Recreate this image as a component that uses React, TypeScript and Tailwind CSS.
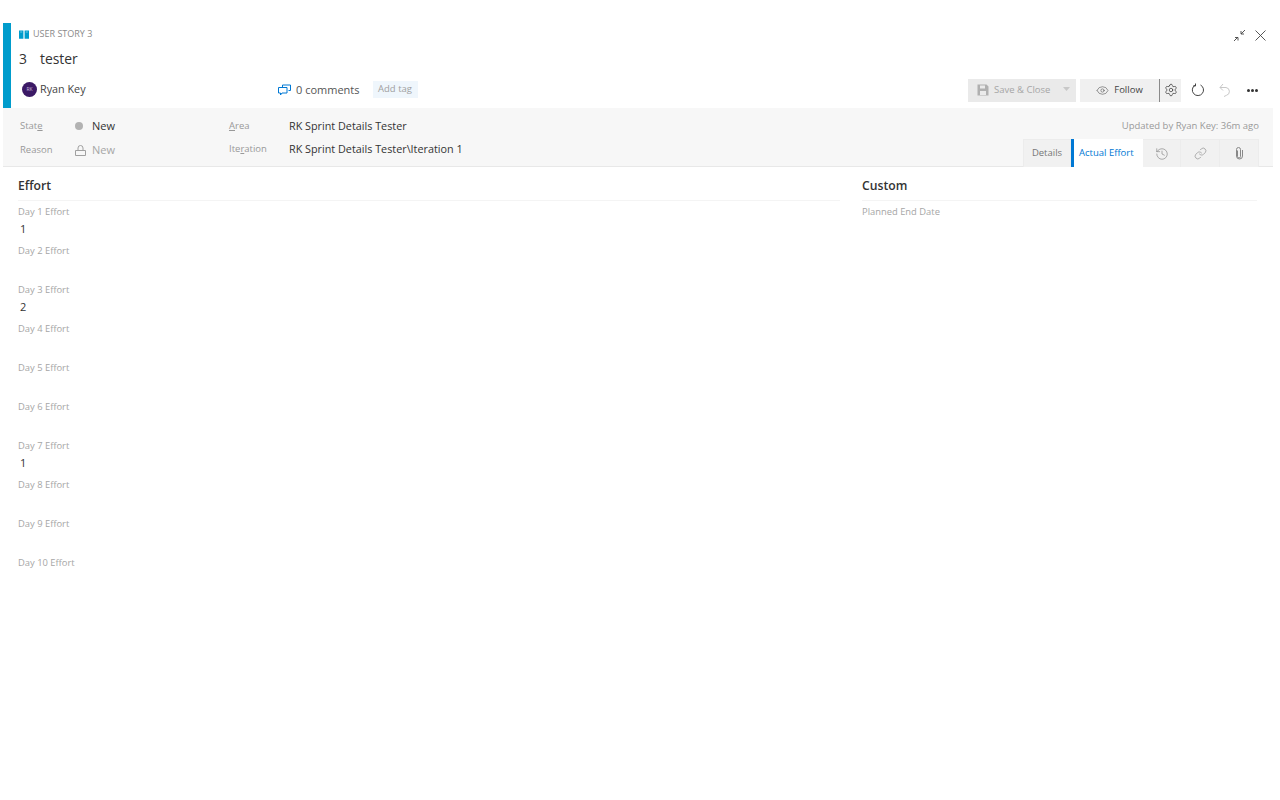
import { Eye, History, Link, Settings } from 'lucide-react';

const font = { fontFamily: '"Open Sans", "Noto Sans", sans-serif' };

const days = [
  { label: 'Day 1 Effort', value: '1' },
  { label: 'Day 2 Effort', value: '' },
  { label: 'Day 3 Effort', value: '2' },
  { label: 'Day 4 Effort', value: '' },
  { label: 'Day 5 Effort', value: '' },
  { label: 'Day 6 Effort', value: '' },
  { label: 'Day 7 Effort', value: '1' },
  { label: 'Day 8 Effort', value: '' },
  { label: 'Day 9 Effort', value: '' },
  { label: 'Day 10 Effort', value: '' },
];

function SectionHeading({ title }: { title: string }) {
  return (
    <div className="h-[25px] border-b border-[#f4f4f4] text-[12.2px] font-semibold leading-[19px] text-[#333333]">
      {title}
    </div>
  );
}

function Field({ label, value }: { label: string; value: string }) {
  return (
    <div className="h-[39px] pt-[4px]">
      <div className="text-[9.4px] leading-[13px] text-[#a6a6a6]">{label}</div>
      <div className="mt-[3px] pl-[2px] text-[11px] leading-[16px] text-[#333333]">{value}</div>
    </div>
  );
}

export default function App() {
  return (
    <div className="h-[800px] w-[1280px] overflow-hidden bg-white pl-[3px] pr-[7px] pt-[23px]" style={font}>
      {/* Header */}
      <div className="flex h-[85px] border-l-8 border-[#009ccc]">
        <div className="flex-1 pl-[8px]">
          <div className="flex h-[21px] items-center justify-between pt-[1px]">
            <div className="flex items-center gap-[4px] text-[9px] text-[#8a8a8a]">
              <svg width="10" height="9" viewBox="0 0 10 9">
                <path d="M0 0.5h4.4v8.2H0zM5.6 0.5H10v8.2H5.6z" fill="#009ccc" />
                <path d="M1.2 2h2M6.8 2h2" stroke="#8fd4ea" strokeWidth="0.8" />
              </svg>
              USER STORY 3
            </div>
            <div className="flex items-center gap-[9px] pr-[7px] pt-[2px]">
              <svg width="13" height="13" viewBox="0 0 13 13" fill="none" stroke="#444444" strokeWidth="0.9">
                <path d="M1 12l4-4M2 8.5h3v3M12 1L8 5M8 2v3h3" />
              </svg>
              <svg width="11" height="11" viewBox="0 0 11 11" fill="none" stroke="#444444" strokeWidth="0.9">
                <path d="M0.5 0.5l10 10M10.5 0.5l-10 10" />
              </svg>
            </div>
          </div>
          <div className="mt-[4px] flex h-[22px] items-center gap-[13px] text-[13.9px] text-[#333333]">
            <span>3</span>
            <span>tester</span>
          </div>
          <div className="mt-[8px] flex h-[24px] items-center">
            <div className="flex w-[259px] items-center gap-[3px] pb-[1px] pl-[3px] text-[10.8px] text-[#444444]">
              <div className="flex h-[15px] w-[15px] items-center justify-center rounded-full bg-[#3c1a66] text-[5px] text-[#c8b8dc]">
                RK
              </div>
              Ryan Key
            </div>
            <div className="flex items-center gap-[5px] text-[11px] text-[#555555]">
              <svg width="13" height="12" viewBox="0 0 13 12" fill="none" stroke="#0078d4" strokeWidth="1">
                <path d="M4.5 3V1h8v5.5h-2" />
                <path d="M0.5 3.5h8.5v5.5H4L2.5 11V9H0.5z" />
              </svg>
              0 comments
            </div>
            <div className="mb-[1px] ml-[13px] flex h-[17px] w-[45px] items-center justify-center bg-[#eff6fc] text-[9.5px] text-[#a0a0a0]">
              Add tag
            </div>
            <div className="ml-auto flex items-center pr-[15px]">
              <div className="flex h-[23px] w-[108px] items-center bg-[#eaeaea] pl-[9px] text-[9.5px] text-[#a6a6a6]">
                <svg width="12" height="12" viewBox="0 0 12 12" fill="#b0b0b0">
                  <path d="M0.5 0.5h9l2 2v9h-11zM3 1.5v3h5v-3zM3 7v4h6V7z" fillRule="evenodd" />
                </svg>
                <span className="ml-[5px]">Save &amp; Close</span>
                <svg width="7" height="4" viewBox="0 0 7 4" className="ml-[13px] mb-[2px]" fill="#c8c8c8">
                  <path d="M0 0h7L3.5 4z" />
                </svg>
              </div>
              <div className="ml-[4px] flex h-[23px] w-[79px] items-center justify-center gap-[5px] bg-[#f0f0f0] text-[9.5px] text-[#444444]">
                <Eye size={13} strokeWidth={1} />
                Follow
              </div>
              <div className="flex h-[23px] w-[22px] items-center justify-center border-l border-[#8a8a8a] bg-[#f0f0f0]">
                <Settings size={14} strokeWidth={1.2} className="text-[#333333]" />
              </div>
              {/* refresh */}
              <svg width="14" height="14" viewBox="0 0 14 14" fill="none" stroke="#444444" strokeWidth="1" className="ml-[10px]">
                <path d="M4 2.2A5.6 5.6 0 1 0 9.5 2" />
                <path d="M4.5 0.5v2.5H2" />
              </svg>
              {/* undo */}
              <svg width="12" height="14" viewBox="0 0 12 14" fill="none" stroke="#c8c8c8" strokeWidth="1" className="ml-[14px]">
                <path d="M1 4.5h6a4 4 0 0 1 0.5 7.8L5 13.5" />
                <path d="M4 1L1 4.5 4 7.5" />
              </svg>
              <div className="ml-[16px] flex w-[11px] justify-between">
                <span className="h-[3px] w-[3px] rounded-full bg-[#333333]" />
                <span className="h-[3px] w-[3px] rounded-full bg-[#333333]" />
                <span className="h-[3px] w-[3px] rounded-full bg-[#333333]" />
              </div>
            </div>
          </div>
        </div>
      </div>

      {/* State band */}
      <div className="flex h-[59px] border-b border-[#e8e8e8] bg-[#f7f7f7] pl-[17px]">
        <div className="w-[55px] pt-[11px] text-[9.5px] leading-[14px] text-[#999999]">
          <div>
            Stat<span className="underline">e</span>
          </div>
          <div className="mt-[10px]">Reason</div>
        </div>
        <div className="w-[154px] pt-[10px] text-[11px] leading-[16px]">
          <div className="flex items-center gap-[9px] text-[#333333]">
            <span className="h-[8px] w-[8px] rounded-full bg-[#b2b2b2]" />
            New
          </div>
          <div className="mt-[8px] flex items-center gap-[6px] text-[#a6a6a6]">
            <svg width="11" height="11" viewBox="0 0 11 11" fill="none" stroke="#a0a0a0" strokeWidth="1">
              <path d="M0.5 5.5h10v5h-10zM3 5.5V3a2.5 2.5 0 0 1 5 0v2.5" />
            </svg>
            New
          </div>
        </div>
        <div className="w-[60px] pt-[11px] text-[9.5px] leading-[14px] text-[#999999]">
          <div>
            <span className="underline">A</span>rea
          </div>
          <div className="mt-[9px]">
            Ite<span className="underline">r</span>ation
          </div>
        </div>
        <div className="flex-1 pt-[10px] text-[10.8px] leading-[16px] text-[#333333]">
          <div>RK Sprint Details Tester</div>
          <div className="mt-[7px]">RK Sprint Details Tester\Iteration 1</div>
        </div>
        <div className="flex flex-col items-end pr-[14px]">
          <div className="pt-[11px] text-[9.5px] leading-[14px] text-[#999999]">Updated by Ryan Key: 36m ago</div>
          <div className="mt-[6px] flex h-[28px] text-[9.5px]">
            <div className="flex w-[48px] items-center justify-center border-x border-t border-[#ececec] bg-[#f1f1f1] text-[#777777]">
              Details
            </div>
            <div className="flex h-[28px] w-[72px] items-center border-l-[3px] border-[#0078d4] bg-white pl-[5px] text-[#0078d4]">
              Actual Effort
            </div>
            <div className="flex w-[38px] items-center justify-center border-t border-r border-[#ececec] bg-[#f1f1f1] text-[#777777]">
              <History size={14} strokeWidth={1} />
            </div>
            <div className="flex w-[39px] items-center justify-center border-t border-r border-[#ececec] bg-[#f1f1f1] text-[#777777]">
              <Link size={13} strokeWidth={1} />
            </div>
            <div className="flex w-[39px] items-center justify-center border-t border-r border-[#ececec] bg-[#f1f1f1]">
              <svg width="8" height="13" viewBox="0 0 8 13" fill="none" stroke="#888888" strokeWidth="1">
                <path d="M2.5 3.5v6a1.5 1.5 0 0 0 3 0V2.5a2 2 0 0 0-4 0V9a3 3 0 0 0 6 0V3" />
              </svg>
            </div>
          </div>
        </div>
      </div>

      {/* Body */}
      <div className="flex pl-[15px] pr-[16px] pt-[9px]">
        <div className="w-[822px]">
          <SectionHeading title="Effort" />
          {days.map((d) => (
            <Field key={d.label} label={d.label} value={d.value} />
          ))}
        </div>
        <div className="ml-[22px] flex-1">
          <SectionHeading title="Custom" />
          <Field label="Planned End Date" value="" />
        </div>
      </div>
    </div>
  );
}
